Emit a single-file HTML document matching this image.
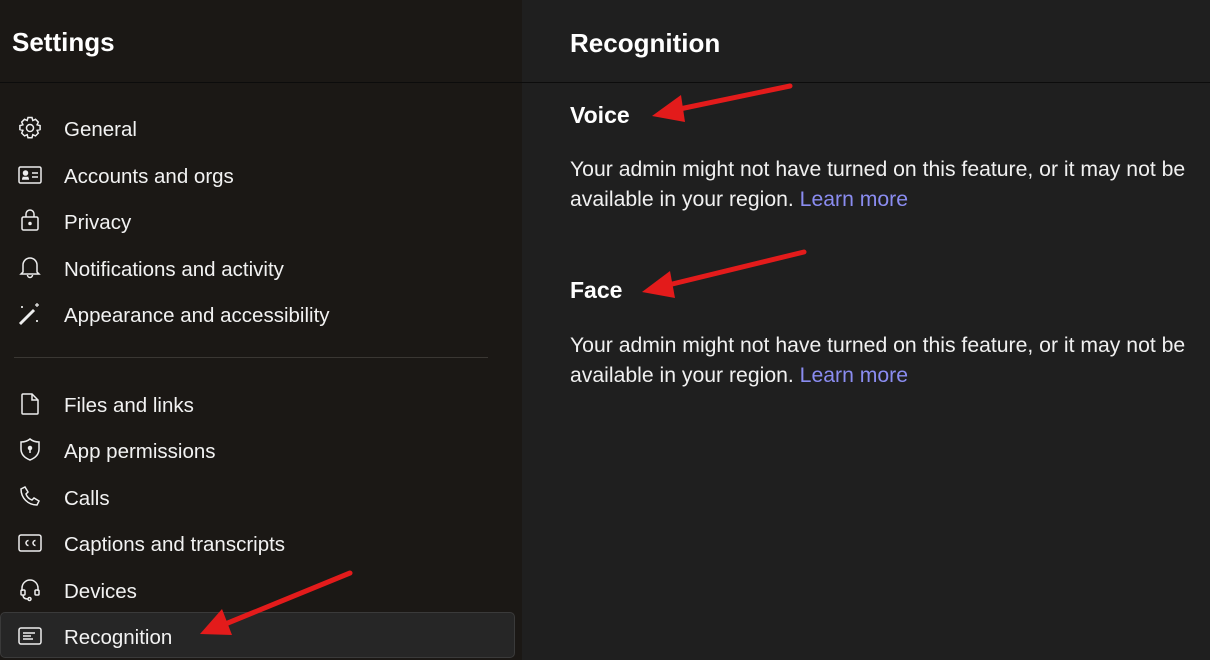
<!DOCTYPE html>
<html><head><style>
body{margin:0;width:1210px;height:660px;overflow:hidden;background:#1f1f1f;font-family:"Liberation Sans",sans-serif;color:#fff;position:relative}
.left{position:absolute;left:0;top:0;width:522px;height:660px;background:#1b1815}
.hline{position:absolute;left:0;top:82px;width:1210px;height:1px;background:#0c0c0c}
.t{position:absolute;white-space:nowrap}
.item{position:absolute;left:64px;font-size:20.5px;color:#f2f2f2}
.ic{position:absolute;left:17px;width:26px;height:26px}
.body{position:absolute;left:570px;font-size:21.2px;line-height:30px;color:#f0f0f0;width:635px}
.body a{color:#8a8cf0;text-decoration:none}
</style></head><body>
<div class="left"></div>
<div class="hline"></div>
<div class="t" style="left:12px;top:27px;font-size:26px;font-weight:bold">Settings</div>
<div class="t" style="left:570px;top:28px;font-size:26px;font-weight:bold">Recognition</div>
<div style="position:absolute;left:14px;top:357px;width:474px;height:1px;background:#3a3733"></div>
<div style="position:absolute;left:0;top:612px;width:515px;height:46px;background:#262626;border:1px solid #3a3a3a;border-radius:5px;box-sizing:border-box"></div>

<svg class="ic" style="top:115px" viewBox="0 0 26 26" fill="none" stroke="#eee" stroke-width="1.5"><circle cx="13" cy="13" r="3.5"/><path d="M11 2.5h4l.8 3 2.7-1.2 2.8 2.8-1.2 2.7 3 .8v4l-3 .8 1.2 2.7-2.8 2.8-2.7-1.2-.8 3h-4l-.8-3-2.7 1.2-2.8-2.8 1.2-2.7-3-.8v-4l3-.8-1.2-2.7 2.8-2.8 2.7 1.2z"/></svg>
<div class="item t" style="top:118px">General</div>
<svg class="ic" style="top:162px" viewBox="0 0 26 26" fill="none" stroke="#eee" stroke-width="1.5"><rect x="2" y="5" width="22" height="16" rx="1.5"/><circle cx="8.5" cy="11" r="2" fill="#eee"/><path d="M5 17h7M5.5 15.5h6" /><path d="M15 11h6M15 15h6"/></svg>
<div class="item t" style="top:165px">Accounts and orgs</div>
<svg class="ic" style="top:207px" viewBox="0 0 26 26" fill="none" stroke="#eee" stroke-width="1.5"><rect x="5" y="10" width="16" height="13" rx="1.5"/><path d="M9 10V7a4 4 0 0 1 8 0v3"/><circle cx="13" cy="16.5" r="1" fill="#eee"/></svg>
<div class="item t" style="top:211px">Privacy</div>
<svg class="ic" style="top:254px" viewBox="0 0 26 26" fill="none" stroke="#eee" stroke-width="1.5"><path d="M6 18V11a7 7 0 0 1 14 0v7l2 2H4z"/><path d="M10.5 21a2.5 2.5 0 0 0 5 0"/></svg>
<div class="item t" style="top:258px">Notifications and activity</div>
<svg class="ic" style="top:301px" viewBox="0 0 26 26" fill="none" stroke="#eee" stroke-width="1.5"><path d="M3 22l1 1 13-13-1-1z"/><path d="M20 2v4M18 4h4M5 5v2M4 6h2M20 19v2M19 20h2" stroke-width="1.2"/></svg>
<div class="item t" style="top:304px">Appearance and accessibility</div>
<svg class="ic" style="top:391px" viewBox="0 0 26 26" fill="none" stroke="#eee" stroke-width="1.5"><path d="M6 3h9l6 6v13a1 1 0 0 1-1 1H6a1 1 0 0 1-1-1V4a1 1 0 0 1 1-1z"/><path d="M15 3v6h6"/></svg>
<div class="item t" style="top:394px">Files and links</div>
<svg class="ic" style="top:437px" viewBox="0 0 26 26" fill="none" stroke="#eee" stroke-width="1.5"><path d="M13 2c3 2.5 6 3 9 3v7c0 6-4 9-9 11-5-2-9-5-9-11V5c3 0 6-.5 9-3z"/><circle cx="13" cy="11" r="1.5" fill="#eee"/><path d="M13 12v4"/></svg>
<div class="item t" style="top:440px">App permissions</div>
<svg class="ic" style="top:484px" viewBox="0 0 26 26" fill="none" stroke="#eee" stroke-width="1.5"><path d="M8 3l3 5-2 2c1 3 3 5 6 6l2-2 5 3-2 4c-9 0-16-7-16-16z"/></svg>
<div class="item t" style="top:487px">Calls</div>
<svg class="ic" style="top:530px" viewBox="0 0 26 26" fill="none" stroke="#eee" stroke-width="1.5"><rect x="2" y="5" width="22" height="16" rx="2"/><path d="M11.5 10.5a2.5 2.5 0 1 0 0 5M18.5 10.5a2.5 2.5 0 1 0 0 5"/></svg>
<div class="item t" style="top:533px">Captions and transcripts</div>
<svg class="ic" style="top:577px" viewBox="0 0 26 26" fill="none" stroke="#eee" stroke-width="1.5"><path d="M5 14v-3a8 8 0 0 1 16 0v3"/><rect x="4" y="13" width="4" height="5" rx="1"/><rect x="18" y="13" width="4" height="5" rx="1"/><path d="M6 18c0 3 2 4 5 4"/><circle cx="12.5" cy="22" r="1.5"/></svg>
<div class="item t" style="top:580px">Devices</div>
<svg class="ic" style="top:623px" viewBox="0 0 26 26" fill="none" stroke="#eee" stroke-width="1.5"><rect x="2" y="5" width="22" height="16" rx="2"/><path d="M6 10h12M6 13h8M6 16h10"/></svg>
<div class="item t" style="top:626px">Recognition</div>

<div class="t" style="left:570px;top:102px;font-size:23px;font-weight:bold">Voice</div>
<div class="body" style="top:155px">Your admin might not have turned on this feature, or it may not be available in your region. <a>Learn more</a></div>
<div class="t" style="left:570px;top:277px;font-size:23px;font-weight:bold">Face</div>
<div class="body" style="top:331px">Your admin might not have turned on this feature, or it may not be available in your region. <a>Learn more</a></div>

<svg style="position:absolute;left:0;top:0" width="1210" height="660">
<g stroke="#e31b1b" stroke-width="5" fill="#e31b1b" stroke-linecap="round">
<line x1="790" y1="86" x2="670" y2="111"/><polygon points="652,116 681,95 685,122" stroke="none"/>
<line x1="804" y1="252" x2="660" y2="287"/><polygon points="642,292 670,271 675,298" stroke="none"/>
<line x1="350" y1="573" x2="218" y2="627"/><polygon points="200,634 222,609 232,635" stroke="none"/>
</g></svg>
</body></html>
